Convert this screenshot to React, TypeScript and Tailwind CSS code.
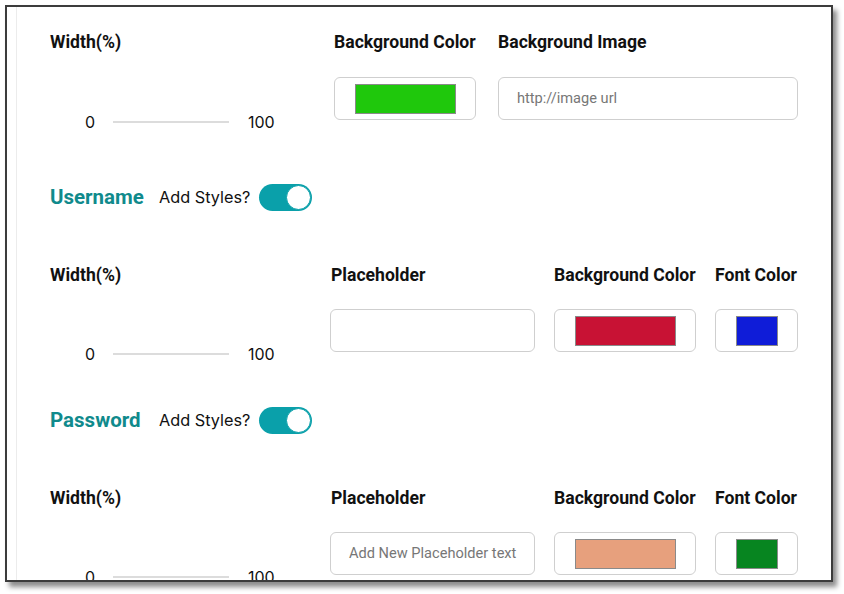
import React from "react";

const label = "font-['Roboto',sans-serif] font-bold text-[17.6px] leading-[24px] text-[#111] whitespace-nowrap";

function Slider() {
  return (
    <div className="flex items-center h-[24px] font-['Inter',sans-serif] text-[16px] text-[#111]">
      <span className="w-[45px] text-right">0</span>
      <div className="ml-[18px] w-[116px] h-[2px] bg-[#dcdcdc]" />
      <span className="ml-[19px]">100</span>
    </div>
  );
}

function Swatch({ w, sw, color }: { w: number; sw: number; color: string }) {
  return (
    <div
      className="h-[43px] rounded-[6px] border border-[#cfcfcf] flex items-center justify-center bg-white"
      style={{ width: w }}
    >
      <div className="h-[30px] border border-[#8a8a8a]" style={{ width: sw, background: color }} />
    </div>
  );
}

function TextInput({ w, text }: { w: number; text?: string }) {
  return (
    <div
      className="h-[43px] rounded-[6px] border border-[#cfcfcf] flex items-center pl-[18px] font-['Roboto',sans-serif] text-[14.6px] text-[#777] whitespace-nowrap overflow-hidden"
      style={{ width: w }}
    >
      {text}
    </div>
  );
}

function Toggle() {
  return (
    <div className="w-[53px] h-[27px] rounded-full bg-[#0aa0aa] flex items-center justify-end pr-[1px]">
      <div className="w-[25px] h-[25px] rounded-full bg-white border border-[#0aa0aa]" />
    </div>
  );
}

function Header({ title }: { title: string }) {
  return (
    <div className="flex items-center h-[28px]">
      <span className="font-['Roboto',sans-serif] font-bold text-[20.5px] text-[#108a8c] w-[109px]">{title}</span>
      <span className="font-['Inter',sans-serif] text-[16.3px] text-[#111] w-[100px]">Add Styles?</span>
      <Toggle />
    </div>
  );
}

function FieldRow({ placeholder, bg, font }: { placeholder?: string; bg: string; font: string }) {
  return (
    <div className="flex">
      <div className="w-[280px]">
        <div className={label}>Width(%)</div>
        <div className="mt-[55px]">
          <Slider />
        </div>
      </div>
      <div className="w-[224px]">
        <div className={label + " pl-[1px]"}>Placeholder</div>
        <div className="mt-[22px]">
          <TextInput w={205} text={placeholder} />
        </div>
      </div>
      <div className="w-[161px]">
        <div className={label}>Background Color</div>
        <div className="mt-[22px]">
          <Swatch w={142} sw={101} color={bg} />
        </div>
      </div>
      <div>
        <div className={label}>Font Color</div>
        <div className="mt-[22px]">
          <Swatch w={83} sw={42} color={font} />
        </div>
      </div>
    </div>
  );
}

export default function App() {
  return (
    <div className="w-[844px] h-[594px] bg-white pt-[5px] pl-[5px]">
      <div className="w-[828px] h-[577px] border-2 border-[#3c3c3c] shadow-[4px_5px_5px_rgba(0,0,0,0.45)] overflow-hidden bg-white">
        <div className="ml-[9px] h-full border-l border-[#ececec] pl-[33px] pt-[23px]">
          {/* Section 1 */}
          <div className="flex">
            <div className="w-[284px]">
              <div className={label}>Width(%)</div>
              <div className="mt-[56px]">
                <Slider />
              </div>
            </div>
            <div className="w-[164px]">
              <div className={label}>Background Color</div>
              <div className="mt-[23px]">
                <Swatch w={142} sw={101} color="#1fc80c" />
              </div>
            </div>
            <div>
              <div className={label}>Background Image</div>
              <div className="mt-[23px]">
                <TextInput w={300} text="http://image url" />
              </div>
            </div>
          </div>

          <div className="mt-[49px]">
            <Header title="Username" />
          </div>

          <div className="mt-[52px]">
            <FieldRow bg="#c81234" font="#0f1cd8" />
          </div>

          <div className="mt-[40px]">
            <Header title="Password" />
          </div>

          <div className="mt-[52px]">
            <FieldRow placeholder="Add New Placeholder text" bg="#e7a07d" font="#078520" />
          </div>
        </div>
      </div>
    </div>
  );
}
